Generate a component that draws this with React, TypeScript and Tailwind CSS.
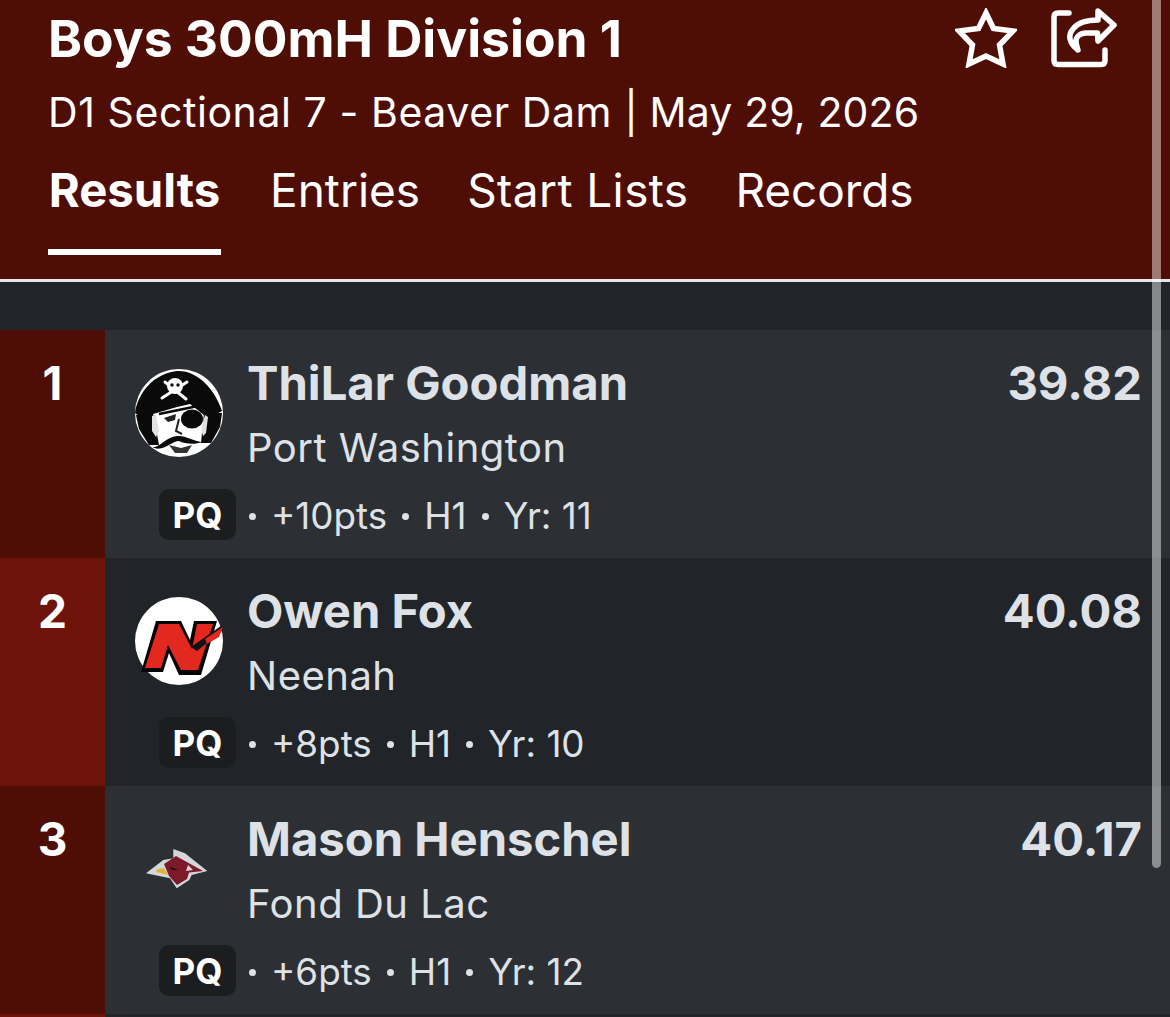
const results = [
  { rank: 1, name: "ThiLar Goodman", school: "Port Washington", time: "39.82", pts: "+10pts", yr: "11", logo: "pirate" },
  { rank: 2, name: "Owen Fox", school: "Neenah", time: "40.08", pts: "+8pts", yr: "10", logo: "neenah" },
  { rank: 3, name: "Mason Henschel", school: "Fond Du Lac", time: "40.17", pts: "+6pts", yr: "12", logo: "cardinal" },
];

function PirateLogo() {
  return (
    <svg width="88" height="88" viewBox="0 0 88 88">
      <circle cx="44" cy="44" r="44" fill="#fff" />
      {/* hat */}
      <path d="M0 44 C3 24 18 5 42 2 C62 1 80 20 87 42 L80 46 L69 46 L55 35 L42 38 L18 45 L8 50Z" fill="#0a0a0a" />
      {/* skull and bones */}
      <path d="M27 29 L52 13 M30 13 L51 30" stroke="#fff" strokeWidth="3" strokeLinecap="round" />
      <circle cx="40" cy="17" r="8" fill="#fff" />
      <circle cx="37" cy="16" r="1.7" fill="#111" />
      <circle cx="43" cy="16" r="1.7" fill="#111" />
      {/* hair and ears */}
      <path d="M1 46 L18 44 L24 76 L14 76 L4 60Z M87 44 L69 44 L66 74 L76 74 L85 58Z" fill="#0a0a0a" />
      <path d="M17 47 L21 46 L24 62 L21 68 L17 62Z M70 46 L73 48 L71 64 L68 67 L66 60Z" fill="#e2e2e2" />
      {/* face */}
      <path d="M24 46 L42 39 L55 36 L67 46 L66 68 L60 76 L50 82 L34 82 L26 72Z" fill="#fff" />
      <path d="M24 45 L68 36" stroke="#0a0a0a" strokeWidth="2.5" />
      <ellipse cx="57" cy="50" rx="11" ry="9.5" fill="#0a0a0a" />
      <path d="M29 49 L41 45 L40 51 L33 53Z" fill="#222" />
      <path d="M44 50 L41 62 L47 65" stroke="#222" strokeWidth="2" fill="none" />
      <path d="M17 78 C24 80 30 68 42 67 C50 66 58 72 67 73 C60 76 50 75 44 72 C36 72 28 84 17 78Z" fill="#0a0a0a" />
      <path d="M34 76 L40 84 L52 84 L57 76 L46 79Z" fill="#333" />
    </svg>
  );
}

function NeenahLogo() {
  return (
    <svg width="88" height="88" viewBox="0 0 88 88" className="overflow-visible">
      <circle cx="44" cy="44" r="44" fill="#fff" />
      <path d="M21 24 L46 24 L55 43 L59 24 L82 24 L66 78 L44 78 L34 56 L28 75 L6 75Z" fill="#050505" />
      <path d="M24 27 L44 27 L57 52 L62 27 L78 27 L63 73 L46 73 L33 48 L26 71 L10 71Z" fill="#e3291f" />
      <path d="M56 50 L86 29 L88 33 L62 54Z" fill="#111" />
      <path d="M70 42 L88 30 L84 40 L72 47Z" fill="#e3291f" />
    </svg>
  );
}

function CardinalLogo() {
  return (
    <svg width="88" height="88" viewBox="0 0 88 88">
      <path d="M11 48.3 L28.3 35 L38.3 33.3 L38.3 24 L50 28.3 L72.3 46 L56.7 50 L54.3 55 L41.7 63.3 L35 53.3Z" fill="#d4d6d8" />
      <path d="M29 39 L41 31 L68 46 L54 47.5 L52 54 L42 60 L34 51Z" fill="#7c1a2c" />
      <path d="M53 40 L58 45 L51 46Z" fill="#d4d6d8" />
      <path d="M21 45 L28.3 42.7 L33.3 50 L21.7 47.3Z" fill="#e3b23c" />
      <path d="M35 41.7 L43.3 45 L36.7 45Z" fill="#15151c" />
    </svg>
  );
}

function Logo({ kind }: { kind: string }) {
  if (kind === "pirate") return <PirateLogo />;
  if (kind === "neenah") return <NeenahLogo />;
  return <CardinalLogo />;
}

function Dot() {
  return <span className="h-[7px] w-[7px] shrink-0 rounded-full bg-[#dee2e6]" />;
}

export default function App() {
  return (
    <div className="relative h-[1017px] w-[1170px] overflow-hidden bg-[#212529] font-['Inter',sans-serif] text-white">
      {/* Header */}
      <div className="h-[279px] bg-[#4f0e05] pl-12">
        <div className="flex h-[76px] items-center justify-between pr-[53px]">
          <h1 className="text-[51.5px] leading-[76px] font-bold">Boys 300mH Division 1</h1>
          <div className="flex items-center gap-[34px]">
            <svg width="62" height="60" viewBox="0 0 62 60" fill="none" stroke="white" strokeWidth="5.5" strokeLinejoin="miter">
              <path d="M31 5 L38.5 20.5 L58 23 L44.5 37 L48 56 L31 48 L14 56 L17.5 37 L4 23 L23.5 20.5Z" />
            </svg>
            <svg width="66" height="60" viewBox="0 0 66 60" fill="none" stroke="white" strokeWidth="5.5" strokeLinecap="round" strokeLinejoin="round">
              <path d="M18 5 H7 Q3 5 3 9 V52.5 Q3 56.5 7 56.5 H50 Q54 56.5 54 52.5 V42" />
              <path d="M27 42 C19 36 16 28 22 21 C27 14 36 12 47 12 V3 L63 17 L47 33 L46.5 25 H35 C29 25 25 29 25 33 C25 36 26 39 27 42Z" />
            </svg>
          </div>
        </div>
        <p className="text-[41px] leading-[72px]">
          <span className="tracking-[0.58px]">D1 Sectional 7 - Beaver Dam </span>
          <span className="tracking-[0.13px]">| May 29, 2026</span>
        </p>
        <nav className="mt-[2px] flex gap-[48px]">
          <a className="flex w-[173px] justify-center pt-[11px] text-[47.3px] leading-[58px] font-bold">Results</a>
          <a className="ml-[1px] pt-[11px] text-[46px] leading-[58px]">Entries</a>
          <a className="-ml-[1px] pt-[11px] text-[46px] leading-[58px] tracking-[0.4px]">Start Lists</a>
          <a className="-ml-[1px] pt-[11px] text-[46px] leading-[58px] tracking-[-0.1px]">Records</a>
        </nav>
      </div>
      <div className="absolute top-[249px] left-12 h-[6px] w-[173px] bg-white" />
      <div className="h-[3px] bg-[#e6e6e8]" />
      <div className="h-[48px]" />

      {/* Result rows */}
      {results.map((r) => {
        const odd = r.rank % 2 === 1;
        return (
          <div key={r.rank} className={`flex h-[228px] ${odd ? "bg-[#2c3035]" : "bg-[#212529]"}`}>
            <div className={`w-[105px] pt-[28px] text-center text-[46px] leading-[50px] font-bold ${odd ? "bg-[#4f0e05]" : "bg-[#6e140a]"}`}>
              {r.rank}
            </div>
            <div className="w-[142px] pt-[39px] pl-[30px]">
              <Logo kind={r.logo} />
            </div>
            <div className="flex-1 pr-[28px] text-[#dee2e6]">
              <div className="flex items-center justify-between pt-[22px]">
                <span className="text-[47.2px] leading-[62px] font-bold">{r.name}</span>
                <span className="text-[47.2px] leading-[62px] font-bold">{r.time}</span>
              </div>
              <p className="mt-[3px] text-[40px] leading-[62px] tracking-[0.5px]">{r.school}</p>
              <div className="relative mt-[15px] flex items-center gap-[15px] pl-[2px] text-[36.8px] leading-[44px]">
                <span className="absolute top-[-5px] left-[-88px] flex h-[51px] w-[77px] items-center justify-center rounded-[10px] bg-[#1c1d1f] text-[35px] font-bold text-white">PQ</span>
                <Dot />
                <span>{r.pts}</span>
                <Dot />
                <span>H1</span>
                <Dot />
                <span>Yr: {r.yr}</span>
              </div>
            </div>
          </div>
        );
      })}
      <div className="flex h-[3px]">
        <div className="w-[105px] bg-[#6e140a]" />
        <div className="flex-1 bg-[#212529]" />
      </div>

      {/* Overlay scrollbar */}
      <div className="absolute top-0 left-[1152px] h-[868px] w-[9px] rounded-b-full bg-white/45" />
    </div>
  );
}
